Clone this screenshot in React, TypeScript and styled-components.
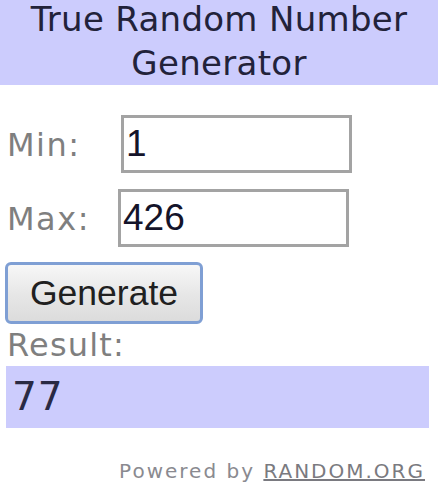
import React from "react";
import styled, { createGlobalStyle } from "styled-components";

const Global = createGlobalStyle`
  html, body { margin: 0; padding: 0; background: #ffffff; }
  body { font-family: "DejaVu Sans", Verdana, sans-serif; }
`;

const Widget = styled.div`
  width: 439px;
  display: flex;
  flex-direction: column;
`;

const Header = styled.div`
  width: 438px;
  height: 85px;
  background: #ccccfd;
  overflow: hidden;
  display: flex;
  justify-content: center;
`;

const Title = styled.h1`
  margin: -3px 0 0 0;
  font-family: "DejaVu Sans", Verdana, sans-serif;
  font-weight: normal;
  font-size: 34px;
  letter-spacing: 0.3px;
  line-height: 44px;
  color: #22223a;
  text-align: center;
`;

const Form = styled.div`
  display: flex;
  flex-direction: column;
  padding: 30px 0 0 6px;
`;

const Row = styled.div<{ $gap?: number }>`
  display: flex;
  align-items: baseline;
  margin-top: ${(p) => p.$gap ?? 0}px;
`;

const Label = styled.span<{ $width: number }>`
  width: ${(p) => p.$width}px;
  padding-left: 1px;
  font-family: "DejaVu Sans", Verdana, sans-serif;
  font-size: 32px;
  letter-spacing: 1.5px;
  line-height: 34px;
  color: #7f7f7f;
`;

const Field = styled.input`
  box-sizing: border-box;
  width: 231px;
  height: 58px;
  border: 3px solid #a3a3a3;
  padding: 0 2px;
  margin: 0;
  background: #ffffff;
  font-family: "Liberation Sans", Arial, sans-serif;
  font-size: 37px;
  color: #14142a;
  outline: none;
`;

const GenerateButton = styled.button`
  box-sizing: border-box;
  margin-top: 15px;
  margin-left: -1px;
  width: 198px;
  height: 62px;
  padding: 0;
  border: 3px solid #7f9fd4;
  border-radius: 6px;
  background: linear-gradient(#f7f7f7, #e6e6e6 55%, #dcdcdc);
  font-family: "Liberation Sans", Arial, sans-serif;
  font-size: 35.5px;
  color: #202020;
  text-align: center;
`;

const ResultLabel = styled.div`
  margin-top: 4px;
  padding-left: 1px;
  font-family: "DejaVu Sans", Verdana, sans-serif;
  font-size: 32px;
  letter-spacing: 1.2px;
  line-height: 34px;
  color: #7f7f7f;
`;

const ResultBox = styled.div`
  margin-top: 4px;
  width: 423px;
  height: 62px;
  box-sizing: border-box;
  padding-left: 6px;
  background: #ccccfd;
  font-family: "DejaVu Sans", Verdana, sans-serif;
  font-size: 39px;
  letter-spacing: 1px;
  line-height: 62px;
  color: #2a2a44;
`;

const Footer = styled.div`
  margin-top: 31px;
  width: 425px;
  text-align: right;
  font-family: "DejaVu Sans", Verdana, sans-serif;
  font-size: 20px;
  line-height: 24px;
  letter-spacing: 2px;
  color: #8a8a90;
`;

const FooterLink = styled.a`
  color: #7a7a80;
  text-decoration: underline;
`;

export default function App() {
  return (
    <>
      <Global />
      <Widget>
        <Header>
          <Title>
            True Random Number
            <br />
            Generator
          </Title>
        </Header>
        <Form>
          <Row>
            <Label $width={114}>Min:</Label>
            <Field value="1" readOnly />
          </Row>
          <Row $gap={16}>
            <Label $width={111}>Max:</Label>
            <Field value="426" readOnly />
          </Row>
          <div>
            <GenerateButton>Generate</GenerateButton>
          </div>
          <ResultLabel>Result:</ResultLabel>
          <ResultBox>77</ResultBox>
        </Form>
        <Footer>
          Powered by <FooterLink href="#">RANDOM.ORG</FooterLink>
        </Footer>
      </Widget>
    </>
  );
}
